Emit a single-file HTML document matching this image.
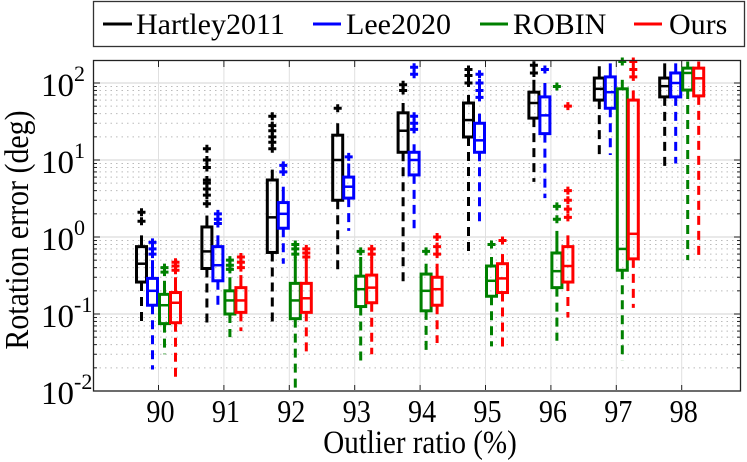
<!DOCTYPE html>
<html><head><meta charset="utf-8"><style>
html,body{margin:0;padding:0;background:#fff;}
svg{display:block;}
text{font-family:"Liberation Serif","Times New Roman",serif;}
</style></head><body>
<svg id="s" width="747" height="462" viewBox="0 0 747 462" xmlns="http://www.w3.org/2000/svg" font-family="Liberation Serif, serif">
<rect width="747" height="462" fill="#fff"/>
<g id="grid"></g>
<g id="data"></g>
<rect x="93.5" y="60.5" width="647" height="330.5" fill="none" stroke="#222" stroke-width="1.3"/>
<g id="ticks"></g>
<rect x="93.5" y="1.5" width="651" height="45" fill="#fff" stroke="#333" stroke-width="1.3"/>
<line x1="103" y1="24" x2="132" y2="24" stroke="#000" stroke-width="3"/>
<text x="136" y="34" font-size="30" font-family="Liberation Serif, serif">Hartley2011</text>
<line x1="313" y1="24" x2="341" y2="24" stroke="#0000ff" stroke-width="3"/>
<text x="346" y="34" font-size="30" font-family="Liberation Serif, serif">Lee2020</text>
<line x1="480" y1="24" x2="508" y2="24" stroke="#008000" stroke-width="3"/>
<text x="513" y="34" font-size="30" font-family="Liberation Serif, serif">ROBIN</text>
<line x1="634" y1="24" x2="662" y2="24" stroke="#ff0000" stroke-width="3"/>
<text x="669" y="34" font-size="30" font-family="Liberation Serif, serif">Ours</text>
<g font-size="33" font-family="Liberation Serif, serif">
<text x="41" y="96">10<tspan font-size="22" dy="-15">2</tspan></text>
<text x="41" y="173">10<tspan font-size="22" dy="-15">1</tspan></text>
<text x="41" y="250">10<tspan font-size="22" dy="-15">0</tspan></text>
<text x="41" y="327">10<tspan font-size="22" dy="-15">-1</tspan></text>
<text x="41" y="404">10<tspan font-size="22" dy="-15">-2</tspan></text>
</g>
<g transform="translate(28,230) rotate(-90) scale(0.88,1)">
<text x="0" y="0" text-anchor="middle" font-size="34" font-family="Liberation Serif, serif">Rotation error (deg)</text>
</g>
<g id="xl"></g>
<g transform="translate(420,453) scale(0.88,1)">
<text x="0" y="0" text-anchor="middle" font-size="33" font-family="Liberation Serif, serif">Outlier ratio (%)</text>
</g>
</svg>
<script>
var NS="http://www.w3.org/2000/svg";
function Y(v){return 83+77*(2-Math.log10(v));}
function el(p,t,a){var e=document.createElementNS(NS,t);for(var k in a)e.setAttribute(k,a[k]);p.appendChild(e);return e;}
var g=document.getElementById('grid'),d=document.getElementById('data'),tk=document.getElementById('ticks'),xl=document.getElementById('xl');
for(var e=-2;e<=2;e++){
  for(var m=1;m<=9;m++){var v=m*Math.pow(10,e);var y=Y(v);if(y<61||y>391)continue;
    if(m==1){el(g,'line',{x1:94,x2:740,y1:y,y2:y,stroke:'#dcdcdc','stroke-width':1.2});
      el(tk,'line',{x1:94,x2:100,y1:y,y2:y,stroke:'#222'});el(tk,'line',{x1:734,x2:740,y1:y,y2:y,stroke:'#222'});}
    else{el(g,'line',{x1:94,x2:740,y1:y,y2:y,stroke:'#bbb','stroke-width':1,'stroke-dasharray':'1.5 4'});
      el(tk,'line',{x1:94,x2:97,y1:y,y2:y,stroke:'#222'});el(tk,'line',{x1:737,x2:740,y1:y,y2:y,stroke:'#222'});}
  }
}
for(var i=0;i<9;i++){var x=158.5+65.4*i;
  el(g,'line',{x1:x,x2:x,y1:61,y2:390,stroke:'#e0e0e0','stroke-width':1});
  el(tk,'line',{x1:x,x2:x,y1:61,y2:67,stroke:'#222'});el(tk,'line',{x1:x,x2:x,y1:385,y2:390,stroke:'#222'});
  var gg=el(xl,'g',{transform:'translate('+(x+2)+',422) scale(0.88,1)'});
  var t=el(gg,'text',{x:0,y:0,'text-anchor':'middle','font-size':32,'font-family':'Liberation Serif, serif'});t.textContent=String(90+i);}
var C=['#000','#0000ff','#008000','#ff0000'],OFF=[-17,-6,6,17];
var D=[
[[0.075,0.26,0.45,0.75,1.05,[1.6,2.1]],[0.019,0.13,0.2,0.29,0.5,[0.6,0.7,0.85]],[0.03,0.075,0.13,0.18,0.27,[0.35,0.4]],[0.013,0.077,0.14,0.19,0.3,[0.37,0.42,0.47]]],
[[0.075,0.39,0.65,1.35,1.9,[2.7,3.5,4.2,5,5.5,8,10,14]],[0.13,0.27,0.43,0.75,1.05,[1.5,1.7,2]],[0.05,0.1,0.15,0.2,0.3,[0.38,0.43,0.5]],[0.06,0.105,0.15,0.22,0.32,[0.4,0.47,0.55]]],
[[0.075,0.63,1.8,5.5,7.5,[14,17,20,24,28,37]],[0.45,1.3,2,2.8,4.5,[7,8.5]],[0.011,0.087,0.15,0.25,0.55,[0.6,0.7,0.8]],[0.03,0.105,0.16,0.25,0.5,[0.55,0.62,0.7]]],
[[0.33,3,10,21,30,[47]],[1.2,3.2,4.5,6,9,[11]],[0.021,0.125,0.21,0.31,0.55,[0.65]],[0.03,0.14,0.22,0.32,0.55,[0.6,0.7]]],
[[0.25,12.6,24,41,55,[80,95]],[1.3,6.4,10,12.6,16,[25,30,37,130,160]],[0.032,0.11,0.2,0.33,0.45,[0.65]],[0.042,0.13,0.21,0.3,0.45,[0.6,0.75,1.0]]],
[[0.55,19.9,33,55,70,[100,125,150]],[1.5,12.6,18,30,40,[65,80,100,130]],[0.038,0.17,0.27,0.42,0.55,[0.8]],[0.033,0.19,0.29,0.45,0.6,[0.9]]],
[[5.2,35,55,76,110,[135,170]],[3.2,22,38,66,100,[150]],[0.045,0.22,0.36,0.62,1.2,[1.7,2.5,90]],[0.09,0.26,0.42,0.75,1.05,[1.8,2.3,3,4,50]]],
[[11.6,60,84,116,165,[]],[11.6,47,76,120,180,[]],[0.025,0.37,0.7,84,110,[190]],[0.12,0.52,1.1,60,80,[120,150,190]]],
[[7,66,91,116,180,[]],[9,66,100,135,180,[]],[0.5,81,135,156,190,[]],[0.5,68,115,156,190,[]]]
];
for(var i=0;i<9;i++)for(var j=0;j<4;j++){
  var r=D[i][j],cx=158.5+65.4*i+OFF[j],c=C[j],w=5;
  el(d,'line',{x1:cx,x2:cx,y1:Y(r[1]),y2:Y(r[0]),stroke:c,'stroke-width':3,'stroke-dasharray':'9 6'});
  el(d,'line',{x1:cx,x2:cx,y1:Y(r[3]),y2:Y(r[4]),stroke:c,'stroke-width':3});
  el(d,'rect',{x:cx-w,y:Y(r[3]),width:2*w,height:Y(r[1])-Y(r[3]),fill:'none',stroke:c,'stroke-width':3});
  el(d,'line',{x1:cx-w,x2:cx+w,y1:Y(r[2]),y2:Y(r[2]),stroke:c,'stroke-width':2.5});
  r[5].forEach(function(o){var y=Y(o);
    el(d,'path',{d:'M'+(cx-4)+' '+y+'H'+(cx+4)+'M'+cx+' '+(y-4)+'V'+(y+4),stroke:c,'stroke-width':3});});
}
</script>
</body></html>
